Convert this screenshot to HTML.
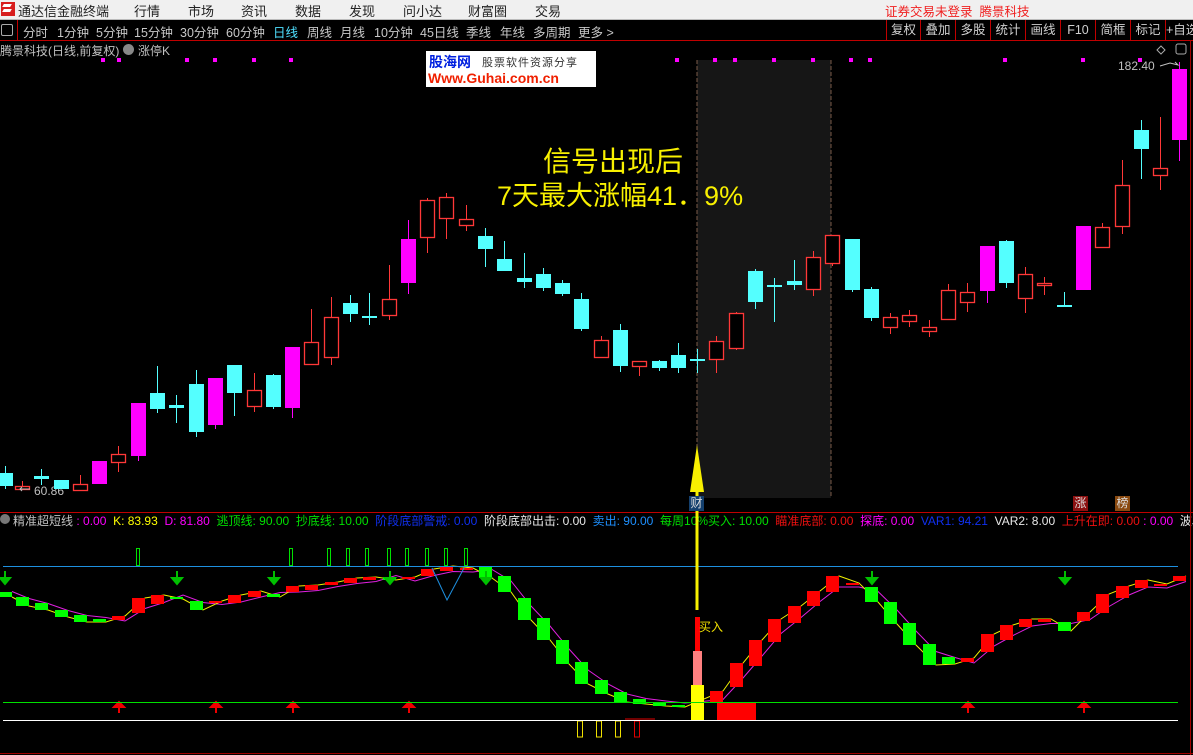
<!DOCTYPE html>
<html><head><meta charset="utf-8">
<style>
html,body{margin:0;padding:0;background:#000;width:1193px;height:755px;overflow:hidden;font-family:"Liberation Sans","Noto Sans CJK SC",sans-serif;}
.t{position:absolute;white-space:nowrap;}
#top{position:absolute;left:0;top:0;width:1193px;height:19px;background:#f0f0f0;border-bottom:1px solid #bbb;font-size:13px;color:#222;}
#tb{position:absolute;left:0;top:20px;width:1193px;height:20px;background:#000;border-bottom:1px solid #c00000;font-size:12.5px;color:#c8c8c8;}
.btn{position:absolute;top:0;height:20px;line-height:20px;border-left:1px solid #c00000;text-align:center;color:#d0d0d0;font-size:12.5px;}
</style></head><body>
<div id="top">
<div class="t" style="left:1px;top:2px;width:14px;height:14px;background:#d81e1e;"></div>
<div class="t" style="left:3px;top:4px;width:8px;height:3px;background:#fff;transform:skewX(-30deg)"></div>
<div class="t" style="left:3px;top:9px;width:8px;height:3px;background:#fff;transform:skewX(-30deg)"></div>
<div class="t" style="left:18px;top:1px;">通达信金融终端</div>
<div class="t" style="left:134px;top:1px;">行情</div>
<div class="t" style="left:188px;top:1px;">市场</div>
<div class="t" style="left:241px;top:1px;">资讯</div>
<div class="t" style="left:295px;top:1px;">数据</div>
<div class="t" style="left:349px;top:1px;">发现</div>
<div class="t" style="left:403px;top:1px;">问小达</div>
<div class="t" style="left:468px;top:1px;">财富圈</div>
<div class="t" style="left:535px;top:1px;">交易</div>
<div class="t" style="left:885px;top:1px;color:#f02020;font-size:12.5px;">证券交易未登录&nbsp; 腾景科技</div>
</div>
<div id="tb">
<div class="t" style="left:1px;top:4px;width:10px;height:10px;border:1px solid #aaa;border-radius:2px;"></div>
<div class="t" style="left:17px;top:0;width:1px;height:20px;background:#c00000"></div>
<div class="t" style="left:23px;top:2px;">分时</div>
<div class="t" style="left:57px;top:2px;">1分钟</div>
<div class="t" style="left:96px;top:2px;">5分钟</div>
<div class="t" style="left:134px;top:2px;">15分钟</div>
<div class="t" style="left:180px;top:2px;">30分钟</div>
<div class="t" style="left:226px;top:2px;">60分钟</div>
<div class="t" style="left:273px;top:2px;color:#4fe0ff;">日线</div>
<div class="t" style="left:307px;top:2px;">周线</div>
<div class="t" style="left:340px;top:2px;">月线</div>
<div class="t" style="left:374px;top:2px;">10分钟</div>
<div class="t" style="left:420px;top:2px;">45日线</div>
<div class="t" style="left:466px;top:2px;">季线</div>
<div class="t" style="left:500px;top:2px;">年线</div>
<div class="t" style="left:533px;top:2px;">多周期</div>
<div class="t" style="left:578px;top:2px;">更多 &gt;</div>
<div class="btn" style="left:886px;width:33px;">复权</div>
<div class="btn" style="left:920px;width:34px;">叠加</div>
<div class="btn" style="left:955px;width:34px;">多股</div>
<div class="btn" style="left:990px;width:34px;">统计</div>
<div class="btn" style="left:1025px;width:34px;">画线</div>
<div class="btn" style="left:1060px;width:34px;">F10</div>
<div class="btn" style="left:1095px;width:34px;">简框</div>
<div class="btn" style="left:1130px;width:34px;">标记</div>
<div class="btn" style="left:1165px;width:40px;text-align:left;">+自选</div>
</div>

<div class="t" style="left:0;top:42px;font-size:12px;color:#c0c0c0;">腾景科技(日线,前复权)</div>
<div class="t" style="left:123px;top:44px;width:11px;height:11px;border-radius:50%;background:#888;"></div>
<div class="t" style="left:138px;top:42px;font-size:12px;color:#c0c0c0;">涨停K</div>

<div class="t" style="left:426px;top:51px;width:170px;height:36px;background:#fff;"></div>
<div class="t" style="left:429px;top:52px;font-size:14px;font-weight:bold;color:#0020e0;">股海网</div>
<div class="t" style="left:482px;top:54px;font-size:11px;color:#333;letter-spacing:1px;">股票软件资源分享</div>
<div class="t" style="left:428px;top:70px;font-size:14px;font-weight:bold;color:#f02000;">Www.Guhai.com.cn</div>

<div class="t" style="left:1118px;top:59px;font-size:12px;color:#c0c0c0;">182.40</div>
<div class="t" style="left:34px;top:484px;font-size:12px;color:#c0c0c0;">60.86</div>

<div class="t" style="left:0;top:512px;width:1193px;height:1px;background:#c00000"></div>
<div class="t" style="left:0;top:514px;width:10px;height:10px;border-radius:50%;background:#777;"></div>
<div class="t" style="left:13px;top:512px;font-size:12px;">
<span style="color:#c0c0c0">精准超短线</span> <span style="color:#ff00ff">: 0.00</span>&nbsp; <span style="color:#ffff00">K: 83.93</span>&nbsp; <span style="color:#ff00ff">D: 81.80</span>&nbsp; <span style="color:#00e000">逃顶线: 90.00</span>&nbsp; <span style="color:#00e000">抄底线: 10.00</span>&nbsp; <span style="color:#1030f0">阶段底部警戒: 0.00</span>&nbsp; <span style="color:#e8e8e8">阶段底部出击: 0.00</span>&nbsp; <span style="color:#1e90ff">卖出: 90.00</span>&nbsp; <span style="color:#00e000">每周10%买入: 10.00</span>&nbsp; <span style="color:#f01010">瞄准底部: 0.00</span>&nbsp; <span style="color:#ff00ff">探底: 0.00</span>&nbsp; <span style="color:#1030f0">VAR1: 94.21</span>&nbsp; <span style="color:#e8e8e8">VAR2: 8.00</span>&nbsp; <span style="color:#f01010">上升在即: 0.00</span> <span style="color:#ff00ff">: 0.00</span>&nbsp; <span style="color:#e8e8e8">波段</span>
</div>

<svg id="s" width="1193" height="755" style="position:absolute;left:0;top:0;pointer-events:none" xmlns="http://www.w3.org/2000/svg">
<rect x="697" y="60" width="134" height="438" fill="#161616"/>
<line x1="697" y1="60" x2="697" y2="498" stroke="#7a5a48" stroke-dasharray="4,2"/>
<line x1="831" y1="60" x2="831" y2="498" stroke="#7a5a48" stroke-dasharray="4,2"/>
<g id="main"></g>
<g id="ind"></g>
<line x1="3" y1="566.5" x2="1178" y2="566.5" stroke="#1e90e0"/>
<line x1="3" y1="702.5" x2="1178" y2="702.5" stroke="#00e000"/>
<line x1="3" y1="720.5" x2="1178" y2="720.5" stroke="#ffffff"/>
<line x1="0" y1="753.5" x2="1193" y2="753.5" stroke="#a00000"/>
<line x1="1190.5" y1="40" x2="1190.5" y2="755" stroke="#a00000"/>
<polyline points="432,568 447,600 464,568" fill="none" stroke="#1e90e0"/>
<line x1="697" y1="470" x2="697" y2="610" stroke="#f8f000" stroke-width="3"/>
<polygon points="697,445 690,492 704,492" fill="#f8f000"/>
<path d="M1160 66 l10 -3 l8 2 l-3 -3" fill="none" stroke="#c0c0c0"/>
<path d="M30 489 h-10 m2 -2 l-2 2 l2 2" fill="none" stroke="#c0c0c0"/>
<path d="M1161 46 l4 4 l-4 4 l-4 -4z" fill="none" stroke="#aaa"/>
<rect x="1176" y="44" width="10" height="10" rx="2" fill="none" stroke="#aaa"/>
</svg>

<div class="t" style="left:543px;top:140px;font-size:28px;color:#f8f000;">信号出现后</div>
<div class="t" style="left:497px;top:174px;font-size:27px;color:#f8f000;">7天最大涨幅41．9%</div>
<div class="t" style="left:689px;top:496px;width:15px;height:15px;background:#14406e;color:#ddd;font-size:12px;line-height:15px;text-align:center;">财</div>
<div class="t" style="left:1073px;top:496px;width:15px;height:15px;background:#8c1010;color:#ddd;font-size:12px;line-height:15px;text-align:center;">涨</div>
<div class="t" style="left:1115px;top:496px;width:15px;height:15px;background:#8a4a10;color:#ddd;font-size:12px;line-height:15px;text-align:center;">榜</div>
<div class="t" style="left:699px;top:618px;font-size:12px;color:#f0e000;">买入</div>

<script>
var NS="http://www.w3.org/2000/svg";
function el(p,t,a){var e=document.createElementNS(NS,t);for(var k in a)e.setAttribute(k,a[k]);p.appendChild(e);return e;}
var M=document.getElementById('main'),I=document.getElementById('ind');
var C=[[5,'c',473,486,466,489],[22,'r',486,489,481,489],[41,'c',476,479,469,485],[61,'c',480,489,480,489],[80,'r',484,490,475,490],[99,'m',461,484,461,484],[118,'r',454,462,446,472],[138,'m',403,456,403,461],[157,'c',393,409,366,413],[176,'c',405,408,395,423],[196,'c',384,432,370,437],[215,'m',378,425,378,429],[234,'c',365,393,365,416],[254,'r',390,406,373,412],[273,'c',375,407,374,409],[292,'m',347,408,347,418],[311,'r',342,364,309,364],[331,'r',317,357,297,365],[350,'c',303,314,295,322],[369,'c',316,318,293,325],[389,'r',299,315,265,320],[408,'m',239,283,220,294],[427,'r',200,237,198,253],[446,'r',197,218,193,239],[466,'r',219,225,205,231],[485,'c',236,249,228,267],[504,'c',259,271,241,271],[524,'c',278,282,253,288],[543,'c',274,288,268,291],[562,'c',283,294,280,296],[581,'c',299,329,293,331],[601,'r',340,357,336,357],[620,'c',330,366,324,372],[639,'r',361,366,361,376],[659,'c',361,368,360,371],[678,'c',355,368,343,373],[697,'c',359,361,349,373],[716,'r',341,359,336,373],[736,'r',313,348,312,350],[755,'c',271,302,269,309],[774,'c',285,287,278,322],[794,'c',281,285,260,290],[813,'r',257,289,251,296],[832,'r',235,263,235,266],[852,'c',239,290,239,292],[871,'c',289,318,287,321],[890,'r',317,327,313,334],[909,'r',315,321,310,327],[929,'r',327,331,320,337],[948,'r',290,319,284,319],[967,'r',292,302,283,312],[987,'m',246,291,246,303],[1006,'c',241,283,240,288],[1025,'r',274,298,267,313],[1044,'r',283,285,277,295],[1064,'c',305,307,292,307],[1083,'m',226,290,226,290],[1102,'r',227,247,223,248],[1122,'r',185,226,160,234],[1141,'c',130,149,120,179],[1160,'r',168,175,117,190],[1179,'m',69,140,62,161]];
C.forEach(function(c){var x=c[0],col=c[1]=='c'?'#54ffff':c[1]=='m'?'#ff00ff':'#ff3838';
el(M,'line',{x1:x+.5,x2:x+.5,y1:c[4],y2:c[5],stroke:col});
if(c[1]=='r')el(M,'rect',{x:x-6.5,y:c[2]+.5,width:14,height:Math.max(1,c[3]-c[2]),fill:'#000',stroke:col,'stroke-width':1.3});
else el(M,'rect',{x:x-7,y:c[2],width:15,height:Math.max(2,c[3]-c[2]),fill:col});});
[103,119,187,215,254,291,677,715,735,774,813,851,870,1005,1083,1140].forEach(function(x){el(M,'rect',{x:x-2,y:58,width:4,height:4,fill:'#ff00ff'});});
var B=[[5,'g',592,597],[22,'g',597,606],[41,'g',603,610],[61,'g',610,617],[80,'g',615,622],[99,'g',619,622],[118,'r',616,620],[138,'r',598,613],[157,'r',595,604],[176,'g',597,599],[196,'g',601,610],[215,'r',601,602],[234,'r',595,603],[254,'r',591,597],[273,'g',594,597],[292,'r',586,592],[311,'r',585,590],[331,'r',582,585],[350,'r',578,583],[369,'r',577,580],[389,'g',577,580],[408,'r',577,579],[427,'r',569,576],[446,'r',566,571],[466,'r',568,570],[485,'g',567,578],[504,'g',576,592],[524,'g',598,620],[543,'g',618,640],[562,'g',640,664],[581,'g',662,684],[601,'g',680,694],[620,'g',692,702],[639,'g',699,704],[659,'g',702,706],[678,'g',705,707],[716,'r',691,702],[736,'r',663,687],[755,'r',640,666],[774,'r',619,642],[794,'r',606,623],[813,'r',591,606],[832,'r',576,592],[852,'r',583,585],[871,'g',587,602],[890,'g',602,624],[909,'g',623,645],[929,'g',644,665],[948,'g',657,664],[967,'r',658,662],[987,'r',634,652],[1006,'r',625,640],[1025,'r',619,627],[1044,'r',619,622],[1064,'g',622,631],[1083,'r',612,621],[1102,'r',594,613],[1122,'r',586,598],[1141,'r',580,588],[1160,'r',584,586],[1179,'r',576,581]];
var yp=[],mp=[];
B.forEach(function(b,i){var yv=b[1]=='r'?b[2]:b[3],mv=b[1]=='r'?b[3]:b[2];yp.push((b[0]+7)+','+yv);mp.push((b[0]+7)+','+((mv+yv)/2+ (b[1]=='r'?3:-3)));});
el(I,'polyline',{points:mp.join(' '),fill:'none',stroke:'#e020e0'});
el(I,'polyline',{points:yp.join(' '),fill:'none',stroke:'#f0f000'});
B.forEach(function(b){el(I,'rect',{x:b[0]-6,y:b[2],width:13,height:Math.max(2,b[3]-b[2]),fill:b[1]=='r'?'#ff0000':'#00ff00'});});
el(I,'rect',{x:691,y:685,width:13,height:35,fill:'#ffff00'});
el(I,'rect',{x:693,y:651,width:9,height:34,fill:'#ff8080'});
el(I,'rect',{x:695,y:617,width:5,height:34,fill:'#ff0000'});
el(I,'rect',{x:717,y:703,width:39,height:17,fill:'#ff0000'});
[138,291,329,348,367,389,407,427,446,466].forEach(function(x){el(I,'rect',{x:x-1.5,y:548.5,width:3,height:17,fill:'none',stroke:'#00e000'});});
[5,177,274,390,486,872,1065].forEach(function(x){el(I,'path',{d:'M'+x+' 571v8M'+(x-5)+' 578l5 6l5 -6z',stroke:'#00c000','stroke-width':2,fill:'#00c000'});});
[119,216,293,409,968,1084].forEach(function(x){el(I,'path',{d:'M'+x+' 713v-8M'+(x-5)+' 707l5 -5l5 5z',stroke:'#f00000','stroke-width':2,fill:'#f00000'});});
[[580,'#f0e000'],[599,'#f0e000'],[618,'#f0e000'],[637,'#e00000']].forEach(function(a){el(I,'rect',{x:a[0]-2.5,y:721,width:5,height:16,fill:'none',stroke:a[1]});});
el(I,'line',{x1:625,x2:655,y1:719,y2:719,stroke:'#e00000'});
</script>
</body></html>
